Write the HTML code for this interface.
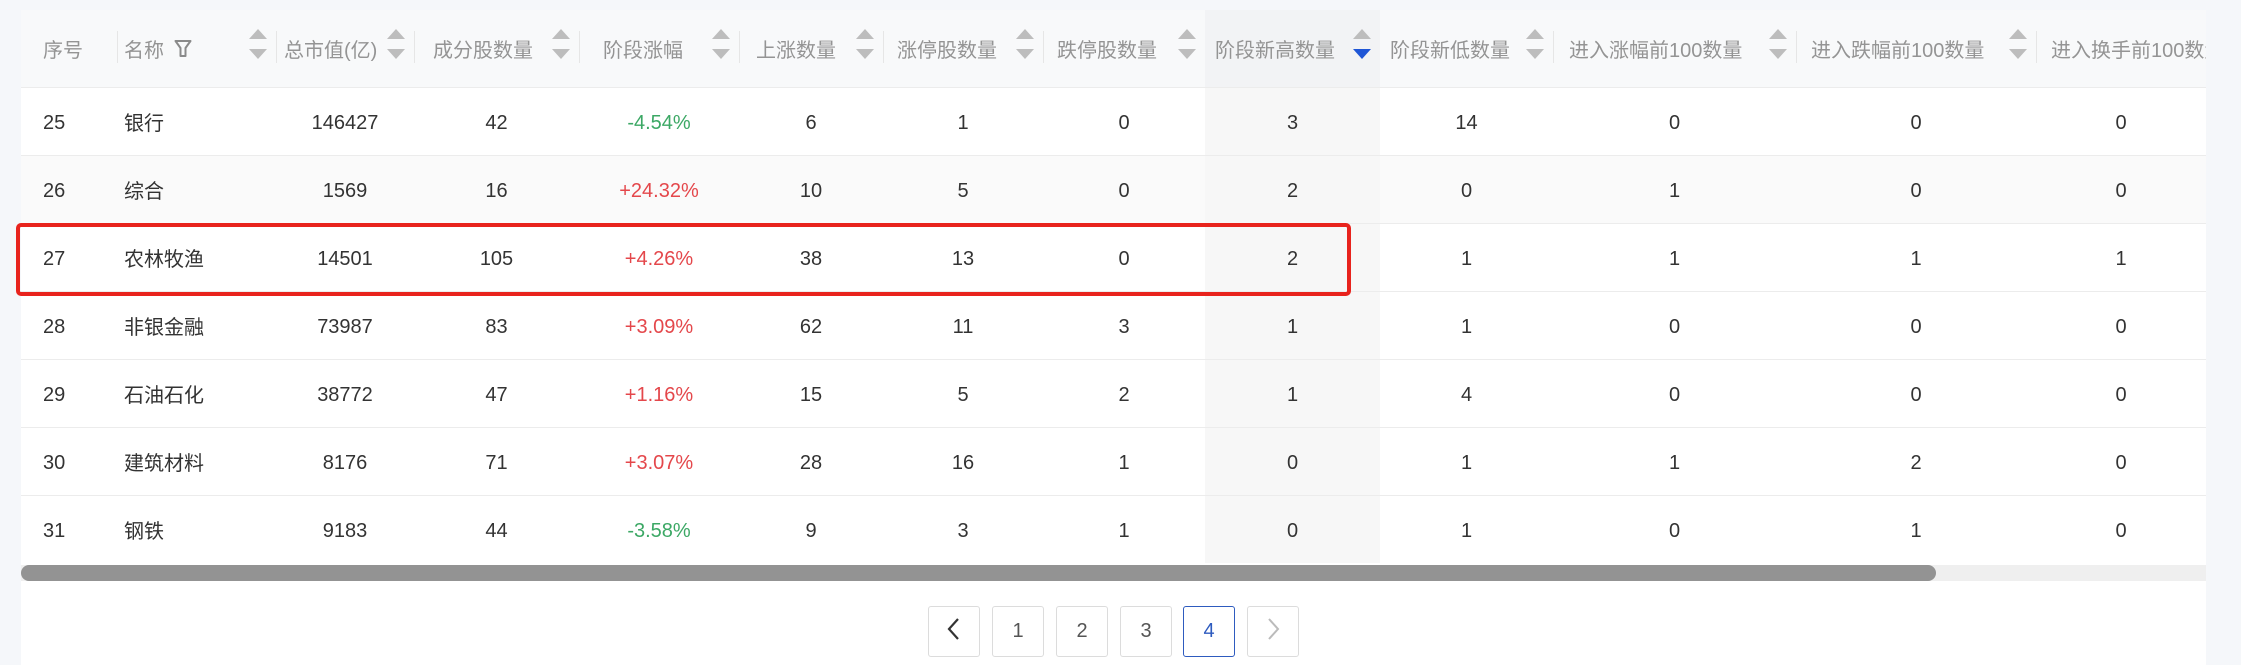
<!DOCTYPE html>
<html><head><meta charset="utf-8"><style>
*{margin:0;padding:0;box-sizing:border-box}
body{width:2241px;height:665px;background:#f5f7fa;font-family:"Liberation Sans","Noto Sans CJK SC",sans-serif;position:relative;overflow:hidden}
#wrap{position:absolute;left:21px;top:10px;width:2185px;height:655px;background:#fff;overflow:hidden}
table{border-collapse:collapse;table-layout:fixed;width:2185px;position:absolute;left:0;top:0}
th{height:77px;background:#f8f9fa;color:#949494;font-weight:normal;font-size:20px;text-align:left;position:relative;white-space:nowrap;overflow:visible;border-bottom:1px solid #ececec}
th .sp{position:absolute;left:0;top:21px;height:32px;border-left:1px solid #e6e6e6}
th .s{position:absolute;right:9px;top:19px;width:18px;height:30px}
td{height:68px;font-size:20px;color:#333;text-align:center;border-bottom:1px solid #ececec;white-space:nowrap;padding-top:4px}
td.l{text-align:left;padding-top:0}
tr.g td{background:#fafafa}
.hc{background:#f7f7f7!important}
th.hc{background:#f2f3f5!important}
.gr{color:#3ca865}.rd{color:#e4474b}
#box{position:absolute;left:16px;top:223px;width:1335px;height:73px;border:4px solid #e8231d;border-radius:5px}
#trk{position:absolute;left:21px;top:565px;width:2185px;height:16px;background:#efefef}
#thm{position:absolute;left:21px;top:565px;width:1915px;height:16px;background:#939393;border-radius:8px}
.pg{position:absolute;top:606px;width:52px;height:51px;border:1px solid #dcdcdc;border-radius:3px;background:#fff;font-size:20px;color:#555;text-align:center;line-height:49px}
</style></head><body>
<div id="wrap">
<table>
<colgroup><col style="width:96px"><col style="width:159px"><col style="width:138px"><col style="width:165px"><col style="width:160px"><col style="width:144px"><col style="width:160px"><col style="width:162px"><col style="width:175px"><col style="width:173px"><col style="width:243px"><col style="width:240px"><col style="width:170px"></colgroup>
<tr>
<th style="padding-left:22px">序号</th>
<th style="padding-left:7px"><span class="sp"></span>名称 <svg width="18" height="20" viewBox="0 0 18 20" style="vertical-align:-2px;margin-left:4px"><path d="M1.5 2h15l-5 7v8h-5V9z" fill="none" stroke="#8a8a8a" stroke-width="2" stroke-linejoin="round"/></svg><svg class="s" viewBox="0 0 18 30"><path d="M9 0L18 10H0z M9 30L18 20H0z" fill="#bdbdbd"/></svg></th>
<th style="padding-left:8px"><span class="sp"></span>总市值(亿)<svg class="s" viewBox="0 0 18 30"><path d="M9 0L18 10H0z M9 30L18 20H0z" fill="#bdbdbd"/></svg></th>
<th style="padding-left:19px"><span class="sp"></span>成分股数量<svg class="s" viewBox="0 0 18 30"><path d="M9 0L18 10H0z M9 30L18 20H0z" fill="#bdbdbd"/></svg></th>
<th style="padding-left:24px"><span class="sp"></span>阶段涨幅<svg class="s" viewBox="0 0 18 30"><path d="M9 0L18 10H0z M9 30L18 20H0z" fill="#bdbdbd"/></svg></th>
<th style="padding-left:17px"><span class="sp"></span>上涨数量<svg class="s" viewBox="0 0 18 30"><path d="M9 0L18 10H0z M9 30L18 20H0z" fill="#bdbdbd"/></svg></th>
<th style="padding-left:14px"><span class="sp"></span>涨停股数量<svg class="s" viewBox="0 0 18 30"><path d="M9 0L18 10H0z M9 30L18 20H0z" fill="#bdbdbd"/></svg></th>
<th style="padding-left:14px"><span class="sp"></span>跌停股数量<svg class="s" viewBox="0 0 18 30"><path d="M9 0L18 10H0z M9 30L18 20H0z" fill="#bdbdbd"/></svg></th>
<th class="hc" style="padding-left:10px">阶段新高数量<svg class="s" viewBox="0 0 18 30"><path d="M9 0L18 10H0z" fill="#bdbdbd"/><path d="M9 30L18 20H0z" fill="#1f56d6"/></svg></th>
<th style="padding-left:10px">阶段新低数量<svg class="s" viewBox="0 0 18 30"><path d="M9 0L18 10H0z M9 30L18 20H0z" fill="#bdbdbd"/></svg></th>
<th style="padding-left:16px"><span class="sp"></span>进入涨幅前100数量<svg class="s" viewBox="0 0 18 30"><path d="M9 0L18 10H0z M9 30L18 20H0z" fill="#bdbdbd"/></svg></th>
<th style="padding-left:15px"><span class="sp"></span>进入跌幅前100数量<svg class="s" viewBox="0 0 18 30"><path d="M9 0L18 10H0z M9 30L18 20H0z" fill="#bdbdbd"/></svg></th>
<th style="padding-left:15px;overflow:hidden"><span class="sp"></span>进入换手前100数量</th>
</tr>
<tr><td class="l" style="padding-left:22px;padding-top:4px">25</td><td class="l" style="padding-left:7px">银行</td><td>146427</td><td>42</td><td class="gr">-4.54%</td><td>6</td><td>1</td><td>0</td><td class="hc">3</td><td>14</td><td>0</td><td>0</td><td>0</td></tr>
<tr class="g"><td class="l" style="padding-left:22px;padding-top:4px">26</td><td class="l" style="padding-left:7px">综合</td><td>1569</td><td>16</td><td class="rd">+24.32%</td><td>10</td><td>5</td><td>0</td><td class="hc">2</td><td>0</td><td>1</td><td>0</td><td>0</td></tr>
<tr><td class="l" style="padding-left:22px;padding-top:4px">27</td><td class="l" style="padding-left:7px">农林牧渔</td><td>14501</td><td>105</td><td class="rd">+4.26%</td><td>38</td><td>13</td><td>0</td><td class="hc">2</td><td>1</td><td>1</td><td>1</td><td>1</td></tr>
<tr><td class="l" style="padding-left:22px;padding-top:4px">28</td><td class="l" style="padding-left:7px">非银金融</td><td>73987</td><td>83</td><td class="rd">+3.09%</td><td>62</td><td>11</td><td>3</td><td class="hc">1</td><td>1</td><td>0</td><td>0</td><td>0</td></tr>
<tr><td class="l" style="padding-left:22px;padding-top:4px">29</td><td class="l" style="padding-left:7px">石油石化</td><td>38772</td><td>47</td><td class="rd">+1.16%</td><td>15</td><td>5</td><td>2</td><td class="hc">1</td><td>4</td><td>0</td><td>0</td><td>0</td></tr>
<tr><td class="l" style="padding-left:22px;padding-top:4px">30</td><td class="l" style="padding-left:7px">建筑材料</td><td>8176</td><td>71</td><td class="rd">+3.07%</td><td>28</td><td>16</td><td>1</td><td class="hc">0</td><td>1</td><td>1</td><td>2</td><td>0</td></tr>
<tr><td class="l" style="padding-left:22px;padding-top:4px;border:0">31</td><td class="l" style="padding-left:7px;border:0">钢铁</td><td style="border:0">9183</td><td style="border:0">44</td><td class="gr" style="border:0">-3.58%</td><td style="border:0">9</td><td style="border:0">3</td><td style="border:0">1</td><td class="hc" style="border:0">0</td><td style="border:0">1</td><td style="border:0">0</td><td style="border:0">1</td><td style="border:0">0</td></tr>
</table>
</div>
<div id="box"></div>
<div id="trk"></div><div id="thm"></div>
<div class="pg" style="left:928px"><svg width="20" height="24" viewBox="0 0 20 24" style="vertical-align:-4px"><path d="M14 2L5 12l9 10" fill="none" stroke="#333" stroke-width="2.2"/></svg></div>
<div class="pg" style="left:992px">1</div>
<div class="pg" style="left:1056px">2</div>
<div class="pg" style="left:1120px">3</div>
<div class="pg" style="left:1183px;border-color:#2e5bbf;color:#2e5bbf">4</div>
<div class="pg" style="left:1247px"><svg width="20" height="24" viewBox="0 0 20 24" style="vertical-align:-4px"><path d="M6 2l9 10-9 10" fill="none" stroke="#bbb" stroke-width="2"/></svg></div>
</body></html>
